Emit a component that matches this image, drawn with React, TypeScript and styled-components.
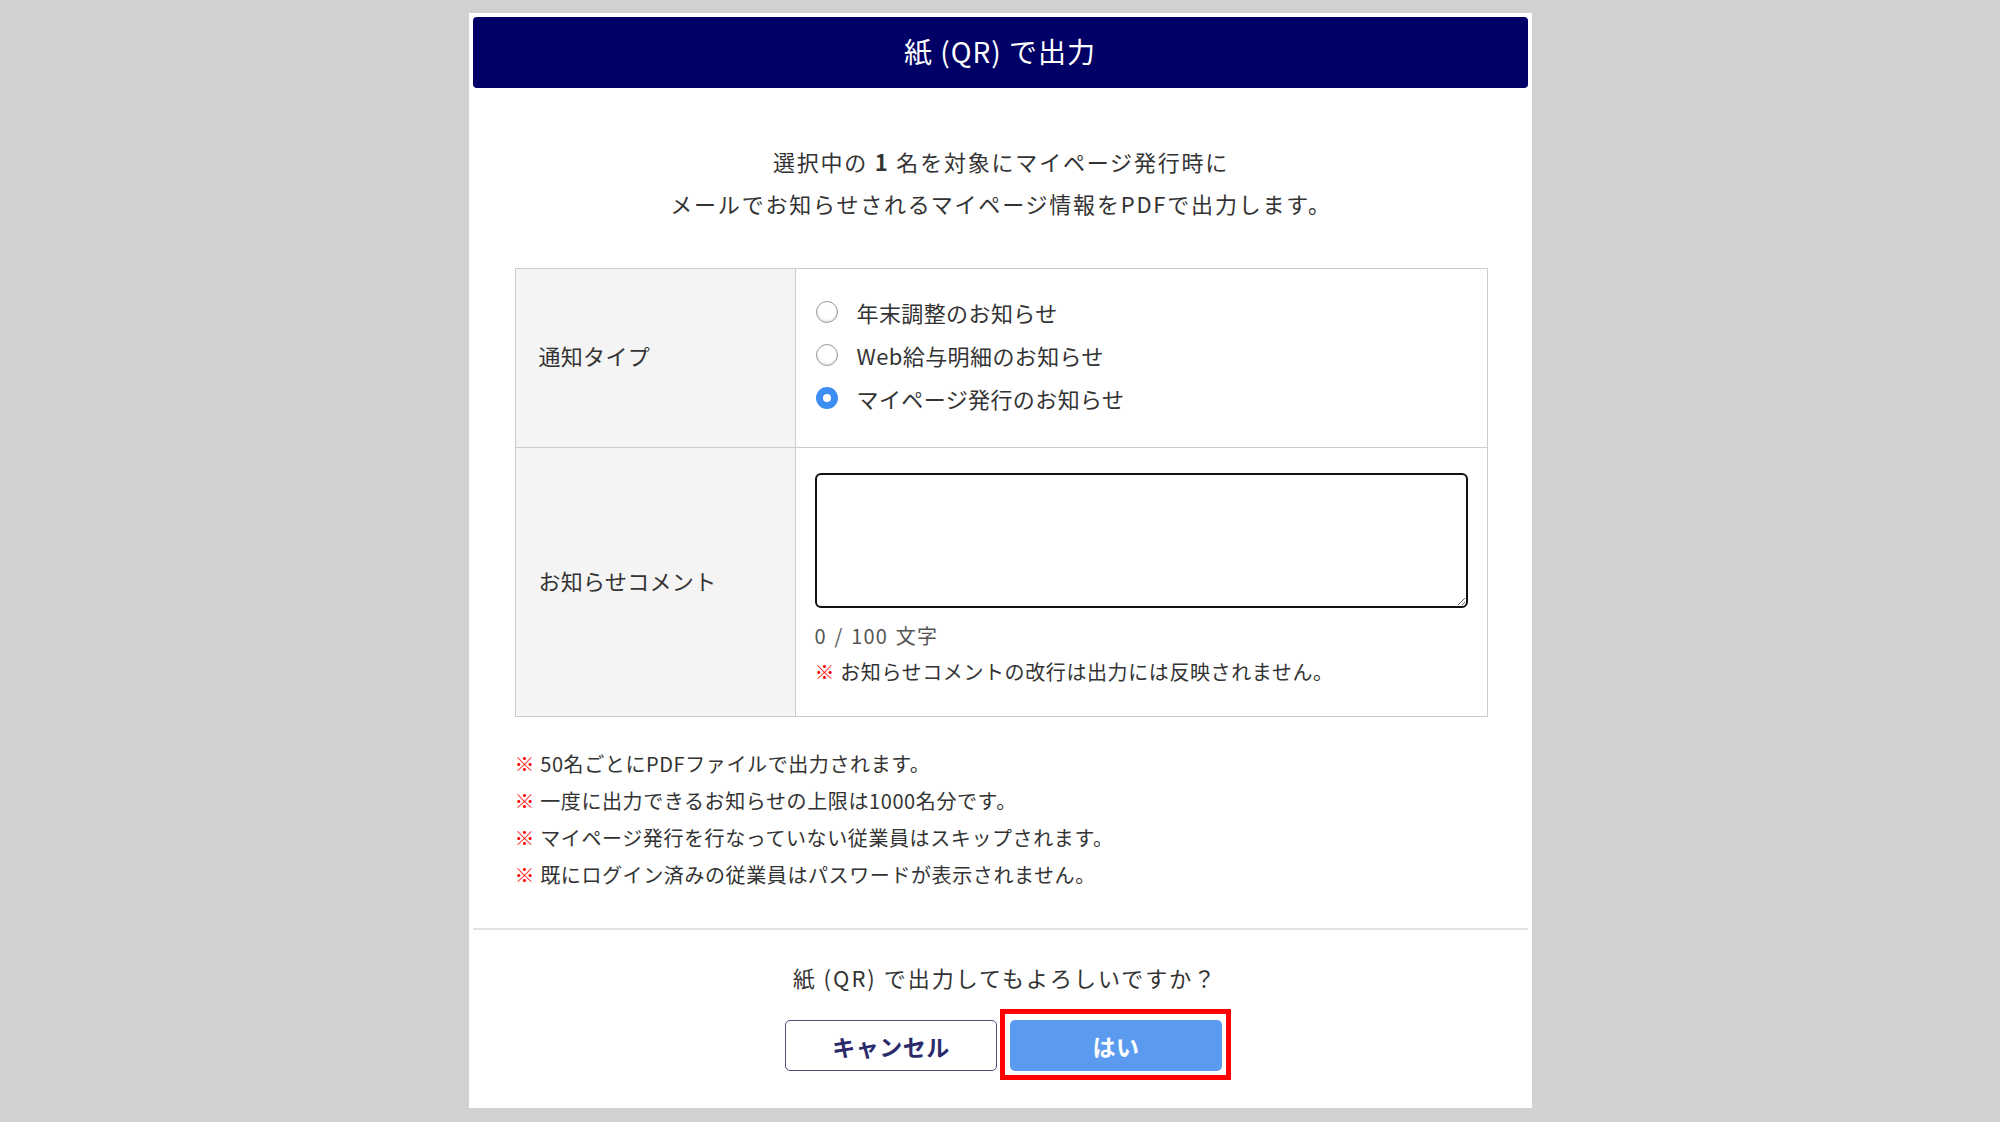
import styled, { createGlobalStyle } from "styled-components";

const GlobalStyle = createGlobalStyle`
  html, body {
    margin: 0;
    padding: 0;
    background: #d3d1d2;
  }
  body {
    font-family: "Noto Sans CJK JP", "Noto Sans", sans-serif;
    color: #333;
  }
`;

const Page = styled.div`
  width: 2000px;
  height: 1122px;
  display: flex;
  justify-content: center;
  align-items: flex-start;
  padding-top: 13px;
  box-sizing: border-box;
`;

const Modal = styled.div`
  width: 1063px;
  background: #fff;
  padding: 4px 4px 37px;
  box-sizing: border-box;
`;

const Header = styled.div`
  height: 71px;
  background: #000066;
  border-radius: 4px;
  color: #fff;
  font-size: 28px;
  letter-spacing: 1px;
  display: flex;
  align-items: center;
  justify-content: center;
  padding-bottom: 3px;
  box-sizing: border-box;
`;

const Body = styled.div`
  padding: 52px 40px 0 42px;
`;

const Lead = styled.p`
  margin: 0;
  text-align: center;
  font-size: 22px;
  line-height: 42px;
  letter-spacing: 1.8px;

  b {
    font-weight: 700;
  }
`;

const Table = styled.div`
  margin-top: 44px;
  border: 1px solid #cccccc;
  display: grid;
  grid-template-columns: 280px 1fr;
`;

const LabelCell = styled.div<{ $last?: boolean }>`
  background: #f4f4f4;
  border-right: 1px solid #cccccc;
  border-bottom: ${(p) => (p.$last ? "none" : "1px solid #cccccc")};
  padding-left: 23px;
  padding-bottom: ${(p) => (p.$last ? "4px" : "6px")};
  display: flex;
  align-items: center;
  font-size: 22px;
  letter-spacing: 0.3px;
`;

const ValueCell = styled.div<{ $last?: boolean }>`
  border-bottom: ${(p) => (p.$last ? "none" : "1px solid #cccccc")};
  padding: ${(p) => (p.$last ? "25px 19px 26px 19px" : "21px 20px 28px 20px")};
`;

const RadioRow = styled.label`
  display: flex;
  align-items: center;
  gap: 19px;
  height: 43px;
  font-size: 22px;
  letter-spacing: 0.4px;
  cursor: pointer;
`;

const RadioDot = styled.span<{ $checked?: boolean }>`
  width: 22px;
  height: 22px;
  border-radius: 50%;
  box-sizing: border-box;
  flex-shrink: 0;
  position: relative;
  background: ${(p) => (p.$checked ? "#3d8ef2" : "#fff")};
  border: ${(p) => (p.$checked ? "none" : "1.5px solid #9a9a9a")};
  box-shadow: ${(p) => (p.$checked ? "none" : "inset 0 -1px 2px rgba(0,0,0,0.15)")};

  &::after {
    content: "";
    display: ${(p) => (p.$checked ? "block" : "none")};
    position: absolute;
    left: 7px;
    top: 7px;
    width: 8px;
    height: 8px;
    border-radius: 50%;
    background: #fff;
  }
`;

const Comment = styled.textarea`
  display: block;
  width: 100%;
  height: 135px;
  box-sizing: border-box;
  border: 2px solid #111;
  border-radius: 6px;
  font-family: inherit;
  font-size: 20px;
  padding: 8px;
  outline: none;
`;

const Counter = styled.div`
  margin-top: 12px;
  font-size: 20px;
  line-height: 32px;
  letter-spacing: 1.2px;
  word-spacing: 2px;
  color: #555;
`;

const Note = styled.div<{ $lh?: number; $gap?: number }>`
  margin-top: ${(p) => p.$gap ?? 0}px;
  font-size: 20px;
  line-height: ${(p) => p.$lh ?? 37}px;
  letter-spacing: 0.6px;
  color: #333;

  span {
    color: #ff0000;
    font-weight: 700;
  }
`;

const Notes = styled.div`
  margin-top: 28px;
`;

const Divider = styled.hr`
  margin: 35px 0 0;
  border: none;
  border-top: 2px solid #e3e3e3;
`;

const Footer = styled.div`
  padding-top: 29px;
  display: flex;
  flex-direction: column;
  align-items: center;
`;

const Question = styled.p`
  margin: 0;
  font-size: 22px;
  line-height: 36px;
  letter-spacing: 2px;
  padding-left: 10px;
`;

const Buttons = styled.div`
  margin-top: 25px;
  display: flex;
  gap: 13px;
  padding-left: 7px;
`;

const Button = styled.button<{ $primary?: boolean }>`
  width: 212px;
  height: 51px;
  border-radius: 5px;
  font-family: inherit;
  font-size: 23px;
  font-weight: 700;
  letter-spacing: 0.5px;
  cursor: pointer;
  background: ${(p) => (p.$primary ? "#5b9bef" : "#fff")};
  color: ${(p) => (p.$primary ? "#fff" : "#2b2b6b")};
  border: ${(p) => (p.$primary ? "none" : "1.5px solid #4d4d80")};
`;

const Highlight = styled.div`
  position: relative;

  &::before {
    content: "";
    position: absolute;
    left: -10px;
    top: -11px;
    right: -9px;
    bottom: -9px;
    border: 5px solid #ff0000;
    pointer-events: none;
  }
`;

const types = [
  { label: "年末調整のお知らせ", checked: false },
  { label: "Web給与明細のお知らせ", checked: false },
  { label: "マイページ発行のお知らせ", checked: true },
];

const notes = [
  "50名ごとにPDFファイルで出力されます。",
  "一度に出力できるお知らせの上限は1000名分です。",
  "マイページ発行を行なっていない従業員はスキップされます。",
  "既にログイン済みの従業員はパスワードが表示されません。",
];

const App = () => {
  return (
    <>
      <GlobalStyle />
      <Page>
        <Modal>
          <Header>紙 (QR) で出力</Header>

          <Body>
            <Lead>
              選択中の <b>1</b> 名を対象にマイページ発行時に
              <br />
              メールでお知らせされるマイページ情報をPDFで出力します。
            </Lead>

            <Table>
              <LabelCell>通知タイプ</LabelCell>
              <ValueCell>
                {types.map((t) => (
                  <RadioRow key={t.label}>
                    <RadioDot $checked={t.checked} />
                    {t.label}
                  </RadioRow>
                ))}
              </ValueCell>

              <LabelCell $last>お知らせコメント</LabelCell>
              <ValueCell $last>
                <Comment />
                <Counter>0 / 100 文字</Counter>
                <Note $lh={36} $gap={2}>
                  <span>※</span> お知らせコメントの改行は出力には反映されません。
                </Note>
              </ValueCell>
            </Table>

            <Notes>
              {notes.map((n) => (
                <Note key={n}>
                  <span>※</span> {n}
                </Note>
              ))}
            </Notes>
          </Body>

          <Divider />

          <Footer>
            <Question>紙 (QR) で出力してもよろしいですか？</Question>
            <Buttons>
              <Button>キャンセル</Button>
              <Highlight>
                <Button $primary>はい</Button>
              </Highlight>
            </Buttons>
          </Footer>
        </Modal>
      </Page>
    </>
  );
};

export default App;
